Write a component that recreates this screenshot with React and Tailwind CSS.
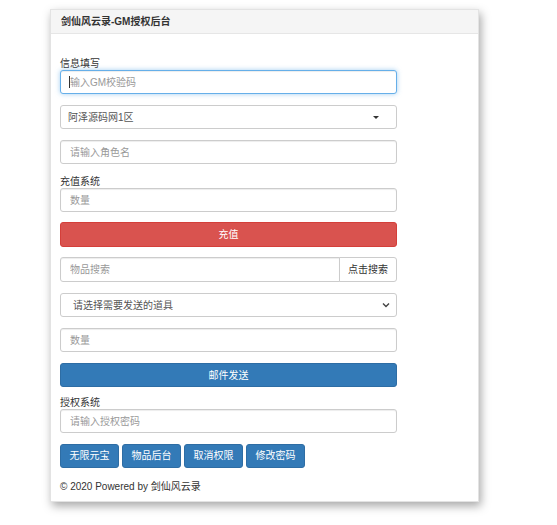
import React from "react";

const inputCls =
  "block w-full h-[24px] px-[9px] rounded-[3px] border border-[#ccc] bg-white text-[10px] text-[#555] placeholder:text-[#999] outline-none shadow-[inset_0_1px_1px_rgba(0,0,0,0.075)]";

function Btn({ children }) {
  return (
    <button className="h-[24px] w-[59px] rounded-[3px] bg-[#337ab7] border border-[#2e6da4] text-white text-[10px] leading-none">
      {children}
    </button>
  );
}

export default function App() {
  return (
    <div
      className="w-[557px] h-[525px] bg-white pt-[9px] pl-[50px]"
      style={{ fontFamily: '"Liberation Sans","Noto Sans CJK SC",sans-serif' }}
    >
      <div className="w-[429px] h-[493px] bg-white border border-[#e3e3e3] shadow-[2px_4px_9px_rgba(0,0,0,0.35)] flex flex-col">
        <div className="h-[24px] shrink-0 bg-[#f5f5f5] border-b border-[#e6e6e6] px-[10px] flex items-center text-[10px] font-bold text-[#333]">
          剑仙风云录-GM授权后台
        </div>
        <div className="px-[9px] pt-[24px] w-[355px] text-[#333]">
          <div className="h-[12px] leading-[12px] text-[10px]">信息填写</div>
          <div className="relative">
            <input
              className="block w-full h-[24px] px-[9px] rounded-[3px] border border-[#66afe9] bg-white text-[10px] placeholder:text-[#999] outline-none shadow-[inset_0_1px_1px_rgba(0,0,0,0.075),0_0_5px_rgba(102,175,233,0.6)]"
              placeholder="输入GM校验码"
            />
            <span className="absolute left-[9px] top-[6px] w-px h-[12px] bg-[#333]" />
          </div>
          <div className="mt-[11px] h-[24px] rounded-[3px] border border-[#ccc] bg-white px-[7px] flex items-center justify-between text-[10px] text-[#555]">
            <span>阿泽源码网1区</span>
            <span className="mr-[10px] w-0 h-0 border-l-[3px] border-r-[3px] border-t-[3px] border-l-transparent border-r-transparent border-t-[#333]" />
          </div>
          <input className={inputCls + " mt-[11px]"} placeholder="请输入角色名" />
          <div className="mt-[12px] h-[12px] leading-[12px] text-[10px]">充值系统</div>
          <input className={inputCls} placeholder="数量" />
          <button className="mt-[10px] block w-full h-[25px] rounded-[3px] bg-[#d9534f] border border-[#d43f3a] text-white text-[10px]">
            充值
          </button>
          <div className="mt-[10px] flex h-[25px]">
            <input
              className="flex-1 min-w-0 h-full px-[9px] rounded-l-[3px] border border-[#ccc] bg-white text-[10px] placeholder:text-[#999] outline-none shadow-[inset_0_1px_1px_rgba(0,0,0,0.075)]"
              placeholder="物品搜索"
            />
            <button className="w-[58px] h-full -ml-px rounded-r-[3px] border border-[#ccc] bg-white text-[10px] text-[#333]">
              点击搜索
            </button>
          </div>
          <div className="mt-[11px] h-[24px] rounded-[3px] border border-[#ccc] bg-white pl-[12px] pr-[5px] flex items-center justify-between text-[10px] text-[#555]">
            <span>请选择需要发送的道具</span>
            <svg width="8" height="6" viewBox="0 0 8 6" className="mr-[1px]">
              <path d="M1 1.5 L4 4.5 L7 1.5" fill="none" stroke="#444" strokeWidth="1.4" />
            </svg>
          </div>
          <input className={inputCls + " mt-[11px]"} placeholder="数量" />
          <button className="mt-[11px] block w-full h-[24px] rounded-[3px] bg-[#337ab7] border border-[#2e6da4] text-white text-[10px]">
            邮件发送
          </button>
          <div className="mt-[10px] h-[12px] leading-[12px] text-[10px]">授权系统</div>
          <input className={inputCls} placeholder="请输入授权密码" />
          <div className="mt-[11px] flex gap-[3px]">
            <Btn>无限元宝</Btn>
            <Btn>物品后台</Btn>
            <Btn>取消权限</Btn>
            <Btn>修改密码</Btn>
          </div>
          <div className="mt-[12px] h-[14px] leading-[14px] text-[10px] text-[#333]">
            © 2020 Powered by 剑仙风云录
          </div>
        </div>
      </div>
    </div>
  );
}
